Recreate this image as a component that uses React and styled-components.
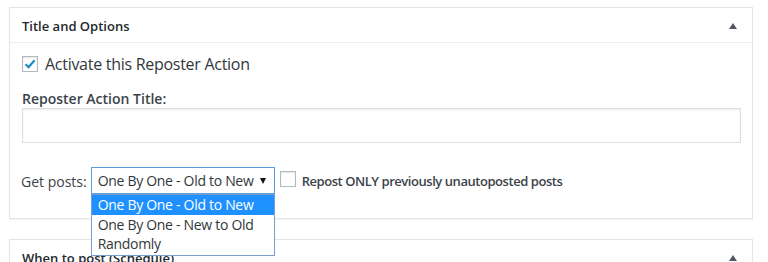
import React from "react";
import styled, { createGlobalStyle } from "styled-components";

const Global = createGlobalStyle`
  html, body { margin: 0; padding: 0; background: #fff; }
  body { font-family: "Open Sans", "Noto Sans", sans-serif; color: #32373c; }
  * { box-sizing: border-box; }
`;

const Page = styled.div`
  padding: 7px 15px 0 9px;
  height: 262px;
  overflow: hidden;
  display: flex;
  flex-direction: column;
  gap: 20px;
`;

const Card = styled.section`
  background: #fff;
  border: 1px solid #e5e5e5;
  box-shadow: 0 1px 1px rgba(0, 0, 0, 0.04);
  flex-shrink: 0;
`;

const CardHeader = styled.div`
  height: 35px;
  padding: 0 15px 0 12px;
  display: flex;
  align-items: center;
  justify-content: space-between;
  border-bottom: 1px solid #eee;
`;

const CardTitle = styled.h2`
  margin: 0;
  font-size: 13px;
  font-weight: 600;
  line-height: 20px;
  color: #23282d;
  padding-top: 2px;
`;

const Toggle = styled.span`
  width: 0;
  height: 0;
  border-left: 4px solid transparent;
  border-right: 4px solid transparent;
  border-bottom: 6px solid #50575e;
  margin-top: 2px;
`;

const CardBody = styled.div`
  padding: 12px 11px 24px 12px;
  display: flex;
  flex-direction: column;
`;

const CheckRow = styled.label`
  display: flex;
  align-items: center;
  gap: 7px;
  height: 18px;
  font-size: 16px;
  font-weight: 400;
  letter-spacing: -0.28px;
  color: #32373c;
`;

const Box = styled.span`
  width: 16px;
  height: 16px;
  border: 1px solid #b4b9be;
  background: #fff;
  box-shadow: inset 0 1px 2px rgba(0, 0, 0, 0.1);
  display: inline-flex;
  align-items: center;
  justify-content: center;
  flex-shrink: 0;
`;

const FieldLabel = styled.div`
  margin-top: 17px;
  font-size: 14px;
  line-height: 18px;
  font-weight: 600;
  color: #3c434a;
`;

const TextInput = styled.input`
  height: 35px;
  width: 100%;
  border: 1px solid #ddd;
  box-shadow: inset 0 1px 2px rgba(0, 0, 0, 0.07);
  background: #fff;
  margin: 0;
`;

const PostsRow = styled.div`
  margin-top: 24px;
  display: flex;
  align-items: center;
  height: 27px;
  font-size: 14px;
`;

const RowLabel = styled.span`
  margin-left: -1px;
  margin-right: 4px;
  color: #3c434a;
  padding-top: 1px;
`;

const SelectWrap = styled.div`
  position: relative;
  width: 184px;
  height: 27px;
`;

const SelectBox = styled.div`
  height: 27px;
  border: 1px solid #5b9dd9;
  background: #fff;
  display: flex;
  align-items: center;
  justify-content: space-between;
  padding: 0 8px 0 6px;
  font-size: 14px;
  letter-spacing: -0.3px;
  white-space: nowrap;
  color: #32373c;
`;

const Caret = styled.span`
  width: 0;
  height: 0;
  border-left: 3.5px solid transparent;
  border-right: 3.5px solid transparent;
  border-top: 6px solid #111;
`;

const List = styled.ul`
  position: absolute;
  top: 100%;
  left: 0;
  width: 184px;
  margin: 0;
  padding: 0 0 1px;
  list-style: none;
  background: #fff;
  border: 1px solid #7a9bd0;
  z-index: 5;
`;

const Option = styled.li`
  height: 19.5px;
  line-height: 19.5px;
  padding: 0 6px;
  font-size: 14px;
  letter-spacing: -0.3px;
  white-space: nowrap;
  color: ${(p) => (p.$active ? "#fff" : "#32373c")};
  background: ${(p) => (p.$active ? "#1e90ff" : "transparent")};
`;

const SmallCheck = styled.label`
  margin-left: 5px;
  display: flex;
  align-items: center;
  gap: 6px;
  font-size: 13px;
  font-weight: 600;
  letter-spacing: -0.45px;
  white-space: nowrap;
  color: #3c434a;
`;

const EmptyBox = styled(Box)`
  margin-top: -3px;
`;

export default function App() {
  return (
    <>
      <Global />
      <Page>
        <Card>
          <CardHeader>
            <CardTitle>Title and Options</CardTitle>
            <Toggle />
          </CardHeader>
          <CardBody>
            <CheckRow>
              <Box>
                <svg width="14" height="14" viewBox="0 0 14 14">
                  <path d="M2.5 7.2 L5.6 10.2 L11.6 3.2" fill="none" stroke="#1e8cbe" strokeWidth="2.2" />
                </svg>
              </Box>
              Activate this Reposter Action
            </CheckRow>
            <FieldLabel>Reposter Action Title:</FieldLabel>
            <TextInput type="text" />
            <PostsRow>
              <RowLabel>Get posts:</RowLabel>
              <SelectWrap>
                <SelectBox>
                  <span>One By One - Old to New</span>
                  <Caret />
                </SelectBox>
                <List>
                  <Option $active>One By One - Old to New</Option>
                  <Option>One By One - New to Old</Option>
                  <Option>Randomly</Option>
                </List>
              </SelectWrap>
              <SmallCheck>
                <EmptyBox />
                Repost ONLY previously unautoposted posts
              </SmallCheck>
            </PostsRow>
          </CardBody>
        </Card>
        <Card>
          <CardHeader>
            <CardTitle>When to post (Schedule)</CardTitle>
            <Toggle />
          </CardHeader>
        </Card>
      </Page>
    </>
  );
}
